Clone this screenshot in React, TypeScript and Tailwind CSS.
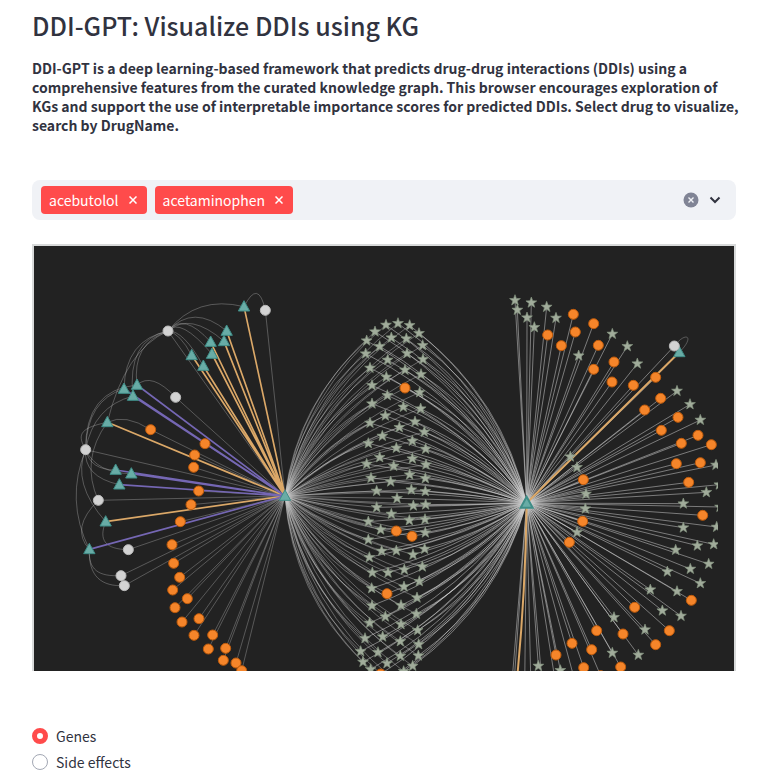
import { useState } from "react";

type Point = [number, number];

const LEFT_HUB: Point = [753, 750];
const RIGHT_HUB: Point = [1478, 771];

const move = (points: Point[], dx: number, dy: number): Point[] =>
  points.map(([x, y]) => [x + dx, y + dy]);

const sharedStars = move(
  [
    [384, 70], [348, 75], [419, 76], [315, 95], [447, 100], [290, 122], [364, 113], [409, 116], [458, 136],
    [329, 139], [287, 161], [411, 160], [459, 178], [353, 180], [300, 204], [405, 210], [453, 223], [349, 231],
    [306, 256], [449, 277], [352, 286], [306, 311], [400, 321], [452, 326], [346, 347], [300, 369], [435, 365],
    [388, 382], [463, 396], [337, 408], [295, 430], [427, 423], [379, 444], [467, 447], [329, 472], [427, 476],
    [290, 492], [371, 498], [468, 494], [303, 534], [419, 524], [466, 535], [362, 545], [320, 573], [424, 569],
    [466, 574], [381, 595], [320, 622], [430, 617], [467, 614], [364, 642], [295, 665], [418, 661], [465, 658],
    [332, 689], [466, 698], [295, 719], [335, 753], [379, 752], [464, 747], [429, 764], [298, 772], [457, 800],
    [403, 809], [307, 818], [354, 818], [448, 844], [305, 865], [402, 860], [441, 893], [306, 917], [393, 916],
    [439, 942], [346, 950], [299, 969], [393, 973], [443, 991], [338, 1010], [285, 1015], [391, 1024],
    [446, 1033], [272, 1054], [324, 1057], [391, 1068], [445, 1067], [279, 1086], [351, 1090], [428, 1098],
    [302, 1108], [401, 1114], [366, 1134],
  ],
  708,
  162,
);

const sharedGenes = move([[405, 264], [379, 693], [426, 709], [351, 881], [332, 1122]], 708, 162);

const goldDrugs = move(
  [[642, 200], [590, 273], [582, 304], [542, 306], [546, 342], [485, 346], [520, 378], [232, 547], [227, 845]],
  -12,
  -18,
);

const purpleDrugs = move(
  [[282, 447], [321, 435], [309, 468], [257, 690], [304, 701], [268, 734], [178, 928]],
  -12,
  -18,
);

const leftEffects = move(
  [[706, 211], [414, 273], [437, 472], [167, 629], [205, 781], [295, 929], [273, 1007], [283, 1037]],
  -12,
  -18,
);

const leftGenes = move(
  [
    [362, 569], [525, 611], [494, 645], [491, 682], [506, 753], [483, 794], [451, 845], [426, 914], [431, 970],
    [449, 1012], [428, 1050], [472, 1076], [435, 1103], [456, 1146], [507, 1136], [492, 1186], [548, 1185],
    [535, 1227], [587, 1225], [580, 1261], [618, 1269], [635, 1292],
  ],
  -12,
  -18,
);

const rightStars = move(
  [
    [45, 61], [52, 90], [94, 68], [81, 113], [103, 142], [140, 81], [168, 114], [236, 227], [337, 162],
    [382, 199], [412, 251], [531, 333], [570, 373], [601, 420], [648, 555], [211, 530], [231, 562], [258, 642],
    [256, 686], [231, 757], [550, 671], [619, 637], [658, 614], [660, 681], [550, 743], [650, 741], [592, 797],
    [641, 793], [527, 810], [626, 852], [571, 867], [502, 875], [601, 910], [531, 934], [451, 929], [487, 992],
    [543, 1008], [342, 1012], [435, 1049], [337, 1119], [415, 1125], [115, 1158], [181, 1171],
  ],
  1398,
  102,
);

const rightGenes = move(
  [
    [220, 103], [281, 131], [143, 165], [226, 156], [184, 197], [295, 196], [281, 268], [342, 246], [336, 306],
    [400, 316], [467, 292], [482, 355], [434, 390], [534, 412], [484, 451], [594, 466], [544, 490], [634, 494],
    [529, 551], [601, 548], [250, 599], [566, 607], [608, 706], [248, 724], [208, 787], [574, 961], [404, 982],
    [508, 1052], [467, 1094], [290, 1052], [369, 1062], [216, 1090], [275, 1109], [168, 1125], [251, 1163],
    [362, 1161], [302, 1187],
  ],
  1398,
  102,
);

// Nodes that lie below the visible part of the canvas.
const hiddenTargets = move([[34, 1230], [40, 1240], [74, 1230], [93, 1230], [128, 1230], [170, 1230], [232, 1230]], 1398, 102);

const effectArcs = [
  "M642 200Q685 115 706 211",
  "M414 273Q500 165 642 200",
  "M414 273Q490 190 590 273",
  "M414 273Q480 215 582 304",
  "M414 273Q460 215 542 306",
  "M414 273Q450 230 546 342",
  "M414 273Q450 280 485 346",
  "M414 273Q460 270 520 378",
  "M414 273Q285 300 282 447",
  "M414 273Q305 310 321 435",
  "M414 273Q290 300 309 468",
  "M414 273Q285 330 232 547",
  "M321 435Q365 395 437 472",
  "M232 547Q285 520 362 569",
  "M232 547Q150 660 205 781",
  "M232 547C140 565 145 590 167 629",
  "M282 447Q170 480 167 629",
  "M309 468Q190 500 167 629",
  "M321 435Q165 450 167 629",
  "M167 629Q180 690 257 690",
  "M167 629Q200 700 304 701",
  "M167 629Q160 710 268 734",
  "M167 629Q125 730 227 845",
  "M167 629Q105 780 178 928",
  "M205 781Q120 865 178 928",
  "M227 845C205 900 225 928 295 929",
  "M178 928C175 990 205 1010 273 1007",
  "M178 928C175 1010 215 1040 283 1037",
];

function bowed(hub: Point, node: Point, amount: number) {
  const dx = node[0] - hub[0];
  const dy = node[1] - hub[1];
  const length = Math.hypot(dx, dy) || 1;
  const reach = Math.abs(dy) * amount;
  const side = dx * dy < 0 ? 1 : -1;
  const cx = (hub[0] + node[0]) / 2 + (side * dy * reach) / length;
  const cy = (hub[1] + node[1]) / 2 - (side * dx * reach) / length;
  return `M${hub[0]} ${hub[1]}Q${cx} ${cy} ${node[0]} ${node[1]}`;
}

const rays = (hub: Point, nodes: Point[]) => nodes.map(([x, y]) => `M${hub[0]} ${hub[1]}L${x} ${y}`).join("");
const arcs = (hub: Point, nodes: Point[], amount: number) => nodes.map((n) => bowed(hub, n, amount));

const STAR = Array.from({ length: 10 }, (_, i) => {
  const r = i % 2 === 0 ? 17 : 7;
  const a = (Math.PI * i) / 5 - Math.PI / 2;
  return `${(r * Math.cos(a)).toFixed(1)},${(r * Math.sin(a)).toFixed(1)}`;
}).join(" ");

const Star = ({ at }: { at: Point }) => (
  <polygon points={STAR} transform={`translate(${at[0]} ${at[1]})`} fill="#a1ac9b" stroke="#84927f" strokeWidth="2" />
);
const Gene = ({ at }: { at: Point }) => (
  <circle cx={at[0]} cy={at[1]} r="15" fill="#f5852a" stroke="#bd5a0b" strokeWidth="3" />
);
const Effect = ({ at }: { at: Point }) => (
  <circle cx={at[0]} cy={at[1]} r="15" fill="#d3d3d3" stroke="#b9b9b9" strokeWidth="3" />
);
const Drug = ({ at }: { at: Point }) => (
  <path d={`M${at[0]} ${at[1] - 18}l17 31h-34z`} fill="#68aca6" stroke="#3f8d87" strokeWidth="3" />
);

function Network() {
  const shared = [...sharedStars, ...sharedGenes];
  return (
    <svg viewBox="0 0 2100 1275" className="block w-full" role="img" aria-label="Drug interaction network">
      <defs>
        <clipPath id="canvas">
          <rect width="2052" height="1275" />
        </clipPath>
      </defs>
      <g clipPath="url(#canvas)" fill="none">
        <g stroke="#cccccc" strokeOpacity="0.32" strokeWidth="3">
          {[...leftEffects, ...leftGenes].map((n) => (
            <path key={n.join()} d={rays(LEFT_HUB, [n])} />
          ))}
          <g transform="translate(-12 -18)">
            {effectArcs.map((d) => (
              <path key={d} d={d} />
            ))}
          </g>
          <path d="M1921 300C1955 255 1985 270 1936 319" />
        </g>
        <g stroke="#cccccc" strokeOpacity="0.4" strokeWidth="3">
          {arcs(LEFT_HUB, shared, 0.21).map((d) => (
            <path key={d} d={d} />
          ))}
        </g>
        <g stroke="#d4d4d4" strokeOpacity="0.5" strokeWidth="3">
          {arcs(RIGHT_HUB, shared, 0.21).map((d) => (
            <path key={d} d={d} />
          ))}
          {[...rightStars, ...rightGenes, ...hiddenTargets, [1921, 300] as Point].map((n) => (
            <path key={n.join()} d={rays(RIGHT_HUB, [n])} />
          ))}
        </g>
        <g stroke="#dba868" strokeWidth="5">
          <path d={rays(LEFT_HUB, goldDrugs)} />
          <path d="M1478 771L1936 319M1478 771Q1474 1050 1448 1310" strokeWidth="6" />
        </g>
        <path d={rays(LEFT_HUB, purpleDrugs)} stroke="#7567b4" strokeWidth="5" />
        {[...sharedStars, ...rightStars].map((p) => (
          <Star key={p.join()} at={p} />
        ))}
        {[...sharedGenes, ...leftGenes, ...rightGenes].map((p) => (
          <Gene key={p.join()} at={p} />
        ))}
        {[...goldDrugs, ...purpleDrugs, LEFT_HUB, [1936, 319] as Point].map((p) => (
          <Drug key={p.join()} at={p} />
        ))}
        {[...leftEffects, [1921, 300] as Point].map((p) => (
          <Effect key={p.join()} at={p} />
        ))}
        <path d="M1478 752l18 33h-36z" fill="#68aca6" stroke="#3f8d87" strokeWidth="6" />
      </g>
    </svg>
  );
}

function Tag({ name }: { name: string }) {
  return (
    <span className="flex h-7 items-center rounded bg-[#ff4b4b] pl-2 text-[14px] text-white">
      {name}
      <button type="button" aria-label={`Remove ${name}`} className="flex h-7 w-7 items-center justify-center">
        <svg viewBox="0 0 8 8" className="size-2" stroke="currentColor" strokeWidth="1.5" aria-hidden="true">
          <path d="M0.5 0.5l7 7M7.5 0.5l-7 7" />
        </svg>
      </button>
    </span>
  );
}

export default function App() {
  const [choice, setChoice] = useState("Genes");
  return (
    <main className="bg-white pt-[3px] pr-[26px] pl-8 font-['Noto_Sans_CJK_SC','Noto_Sans',sans-serif] text-[#31333f]">
      <h1 className="pt-1 text-[25px] leading-9 font-medium">DDI-GPT: Visualize DDIs using KG</h1>
      <p className="mt-4 -mr-2 text-[14px] leading-[19px] font-bold">
        DDI-GPT is a deep learning-based framework that predicts drug-drug interactions (DDIs) using a comprehensive
        features from the curated knowledge graph. This browser encourages exploration of KGs and support the use of
        interpretable importance scores for predicted DDIs. Select drug to visualize, search by DrugName.
      </p>
      <div className="mt-[45px] flex h-10 items-center gap-2 rounded-lg bg-[#f0f2f6] px-[9px]">
        <Tag name="acebutolol" />
        <Tag name="acetaminophen" />
        <input aria-label="Search drugs" className="min-w-0 flex-1 bg-transparent outline-none" />
        <div className="flex items-center gap-1">
          <button type="button" aria-label="Clear all" className="flex size-4 items-center justify-center">
            <svg viewBox="0 0 16 16" className="size-4" aria-hidden="true">
              <circle cx="8" cy="8" r="7.5" fill="#808495" />
              <path d="M5.5 5.5l5 5M10.5 5.5l-5 5" stroke="#f0f2f6" strokeWidth="1.4" />
            </svg>
          </button>
          <button type="button" aria-label="Open list" className="flex h-6 w-6 items-center justify-center">
            <svg viewBox="0 0 12 8" className="w-3" fill="none" stroke="currentColor" strokeWidth="2" aria-hidden="true">
              <path d="M1.5 1.5L6 6l4.500-4.500" />
            </svg>
          </button>
        </div>
      </div>
      <section className="mt-6 border-2 border-b-0 border-[#d8dada] bg-[#222222]">
        <Network />
      </section>
      <div
        role="radiogroup"
        aria-label="Node type"
        className="mt-[53px] flex flex-col items-start gap-[2px] text-[14px] leading-6"
      >
        {["Genes", "Side effects"].map((name) => (
          <label key={name} className="flex items-center gap-2">
            <input
              type="radio"
              name="layer"
              checked={choice === name}
              onChange={() => setChoice(name)}
              className="size-4 appearance-none rounded-full border border-[#a3a8b4] bg-white checked:border-5 checked:border-[#ff4b4b]"
            />
            {name}
          </label>
        ))}
      </div>
    </main>
  );
}
